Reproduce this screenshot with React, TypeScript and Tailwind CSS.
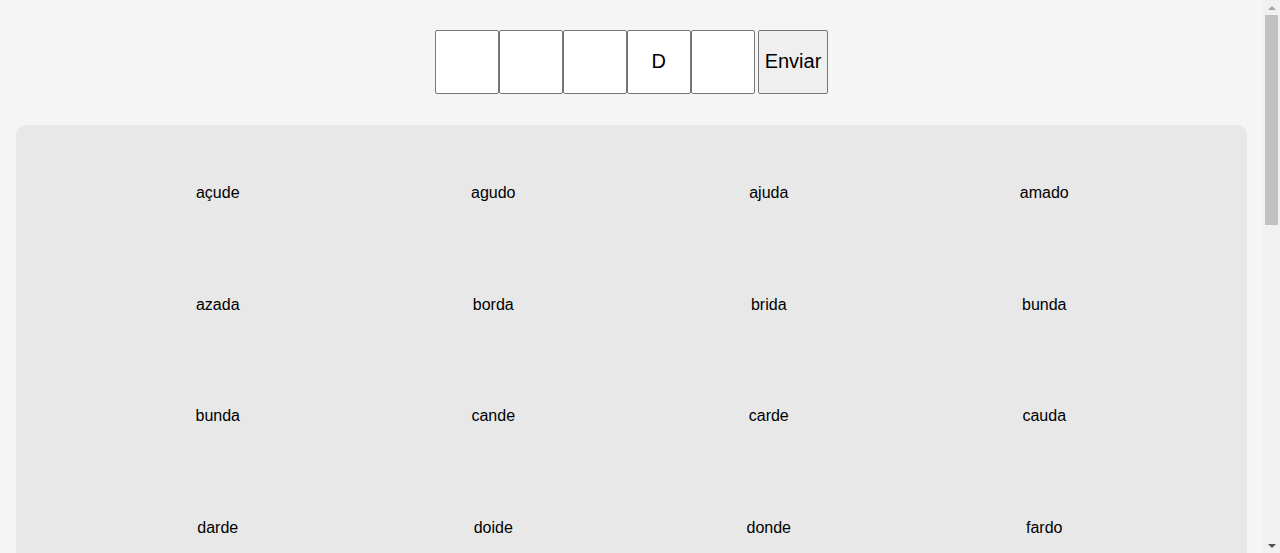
const letters = ["", "", "", "D", ""];

const words = [
  "açude", "agudo", "ajuda", "amado",
  "azada", "borda", "brida", "bunda",
  "bunda", "cande", "carde", "cauda",
  "darde", "doide", "donde", "fardo",
  "fiado", "fundo", "gordo", "grude",
  "lerdo", "lindo", "moeda", "mundo",
  "pardo", "perda", "prado", "queda",
  "renda", "ronda", "saldo", "senda",
  "sonda", "surdo", "tarde", "tenda",
  "tordo", "vendo", "verde", "vinda",
];

// page scrollbar, the browser draws one in the reference
function Scrollbar() {
  return (
    <div className="fixed right-0 top-0 flex h-screen w-[17px] flex-col items-center bg-[#f1f1f1]">
      <div className="flex h-[15px] w-full items-center justify-center">
        <svg width="8" height="4" viewBox="0 0 8 4">
          <polygon points="4,0 8,4 0,4" fill="#a3a3a3" />
        </svg>
      </div>
      <div className="h-[210px] w-[13px] bg-[#c1c1c1]" />
      <div className="flex-1" />
      <div className="flex h-[15px] w-full items-center justify-center">
        <svg width="8" height="4" viewBox="0 0 8 4">
          <polygon points="0,0 8,0 4,4" fill="#505050" />
        </svg>
      </div>
    </div>
  );
}

export default function App() {
  return (
    <div className="min-h-screen bg-[#f5f5f5] pr-[17px] font-['Liberation_Sans',Arial,sans-serif] text-black">
      <div className="pt-[30px] pb-[40px]">
        <form className="flex justify-center" onSubmit={(e) => e.preventDefault()}>
          {letters.map((l, i) => (
            <input
              key={i}
              defaultValue={l}
              maxLength={1}
              className="h-16 w-16 rounded-[2px] border border-[#767676] bg-white pb-[2px] text-center text-[20px] text-black outline-none"
            />
          ))}
          <button
            type="submit"
            className="ml-[3px] h-16 rounded-[2px] border border-[#767676] bg-[#efefef] px-[6px] pb-[2px] text-[20px] text-black"
          >
            Enviar
          </button>
        </form>

        <div className="mx-4 mt-[31px] rounded-[10px] bg-[#e8e8e8] pl-16 pr-[65px] pt-[12px] pb-[20px]">
          <div className="grid grid-cols-4">
            {words.map((w, i) => (
              <div key={i} className="flex h-[111.7px] items-center justify-center text-base">
                {w}
              </div>
            ))}
          </div>
        </div>
      </div>
      <Scrollbar />
    </div>
  );
}
